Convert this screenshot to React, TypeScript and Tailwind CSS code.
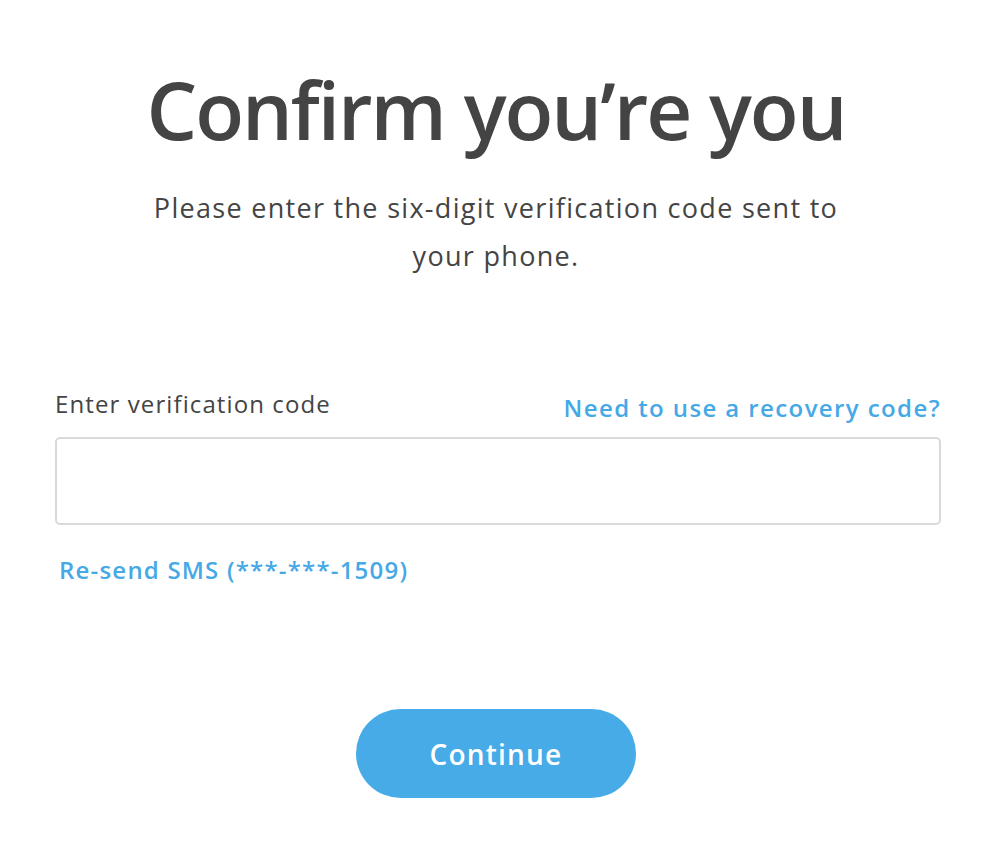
export default function App() {
  return (
    <div className="min-h-[868px] w-full bg-white [font-variant-ligatures:none]" style={{ fontFamily: '"Open Sans", "Lato", sans-serif' }}>
      <div className="flex flex-col items-center pt-[61px]">
        <h1 className="text-[80px] leading-[96px] font-semibold text-[#444444] tracking-[-2px]">Confirm you’re you</h1>
        <p className="mt-[27px] w-[800px] text-center text-[27px] leading-[48px] text-[#444444] tracking-[1.3px]">
          Please enter the six-digit verification code sent to<br />your phone.
        </p>
      </div>
      <div className="mt-[109px] pl-[55px] pr-[51px]">
        <div className="flex items-end justify-between">
          <label className="text-[24px] leading-[30px] text-[#444444] tracking-[1.1px]">Enter verification code</label>
          <a className="text-[24px] leading-[30px] font-semibold text-[#46a9e6] translate-y-[4px] tracking-[1.4px]">Need to use a recovery code?</a>
        </div>
        <div className="mt-[18px] h-[88px] w-full rounded-[5px] border-2 border-[#d9d9d9]"></div>
        <a className="mt-[30px] ml-[4px] block text-[24px] leading-[30px] font-semibold text-[#46a9e6] tracking-[1.2px]">Re-send SMS (***-***-1509)</a>
      </div>
      <div className="mt-[124px] flex justify-center">
        <button className="h-[89px] w-[280px] rounded-full bg-[#47abe8] text-[28px] font-semibold text-white tracking-[1.2px]">Continue</button>
      </div>
    </div>
  );
}
